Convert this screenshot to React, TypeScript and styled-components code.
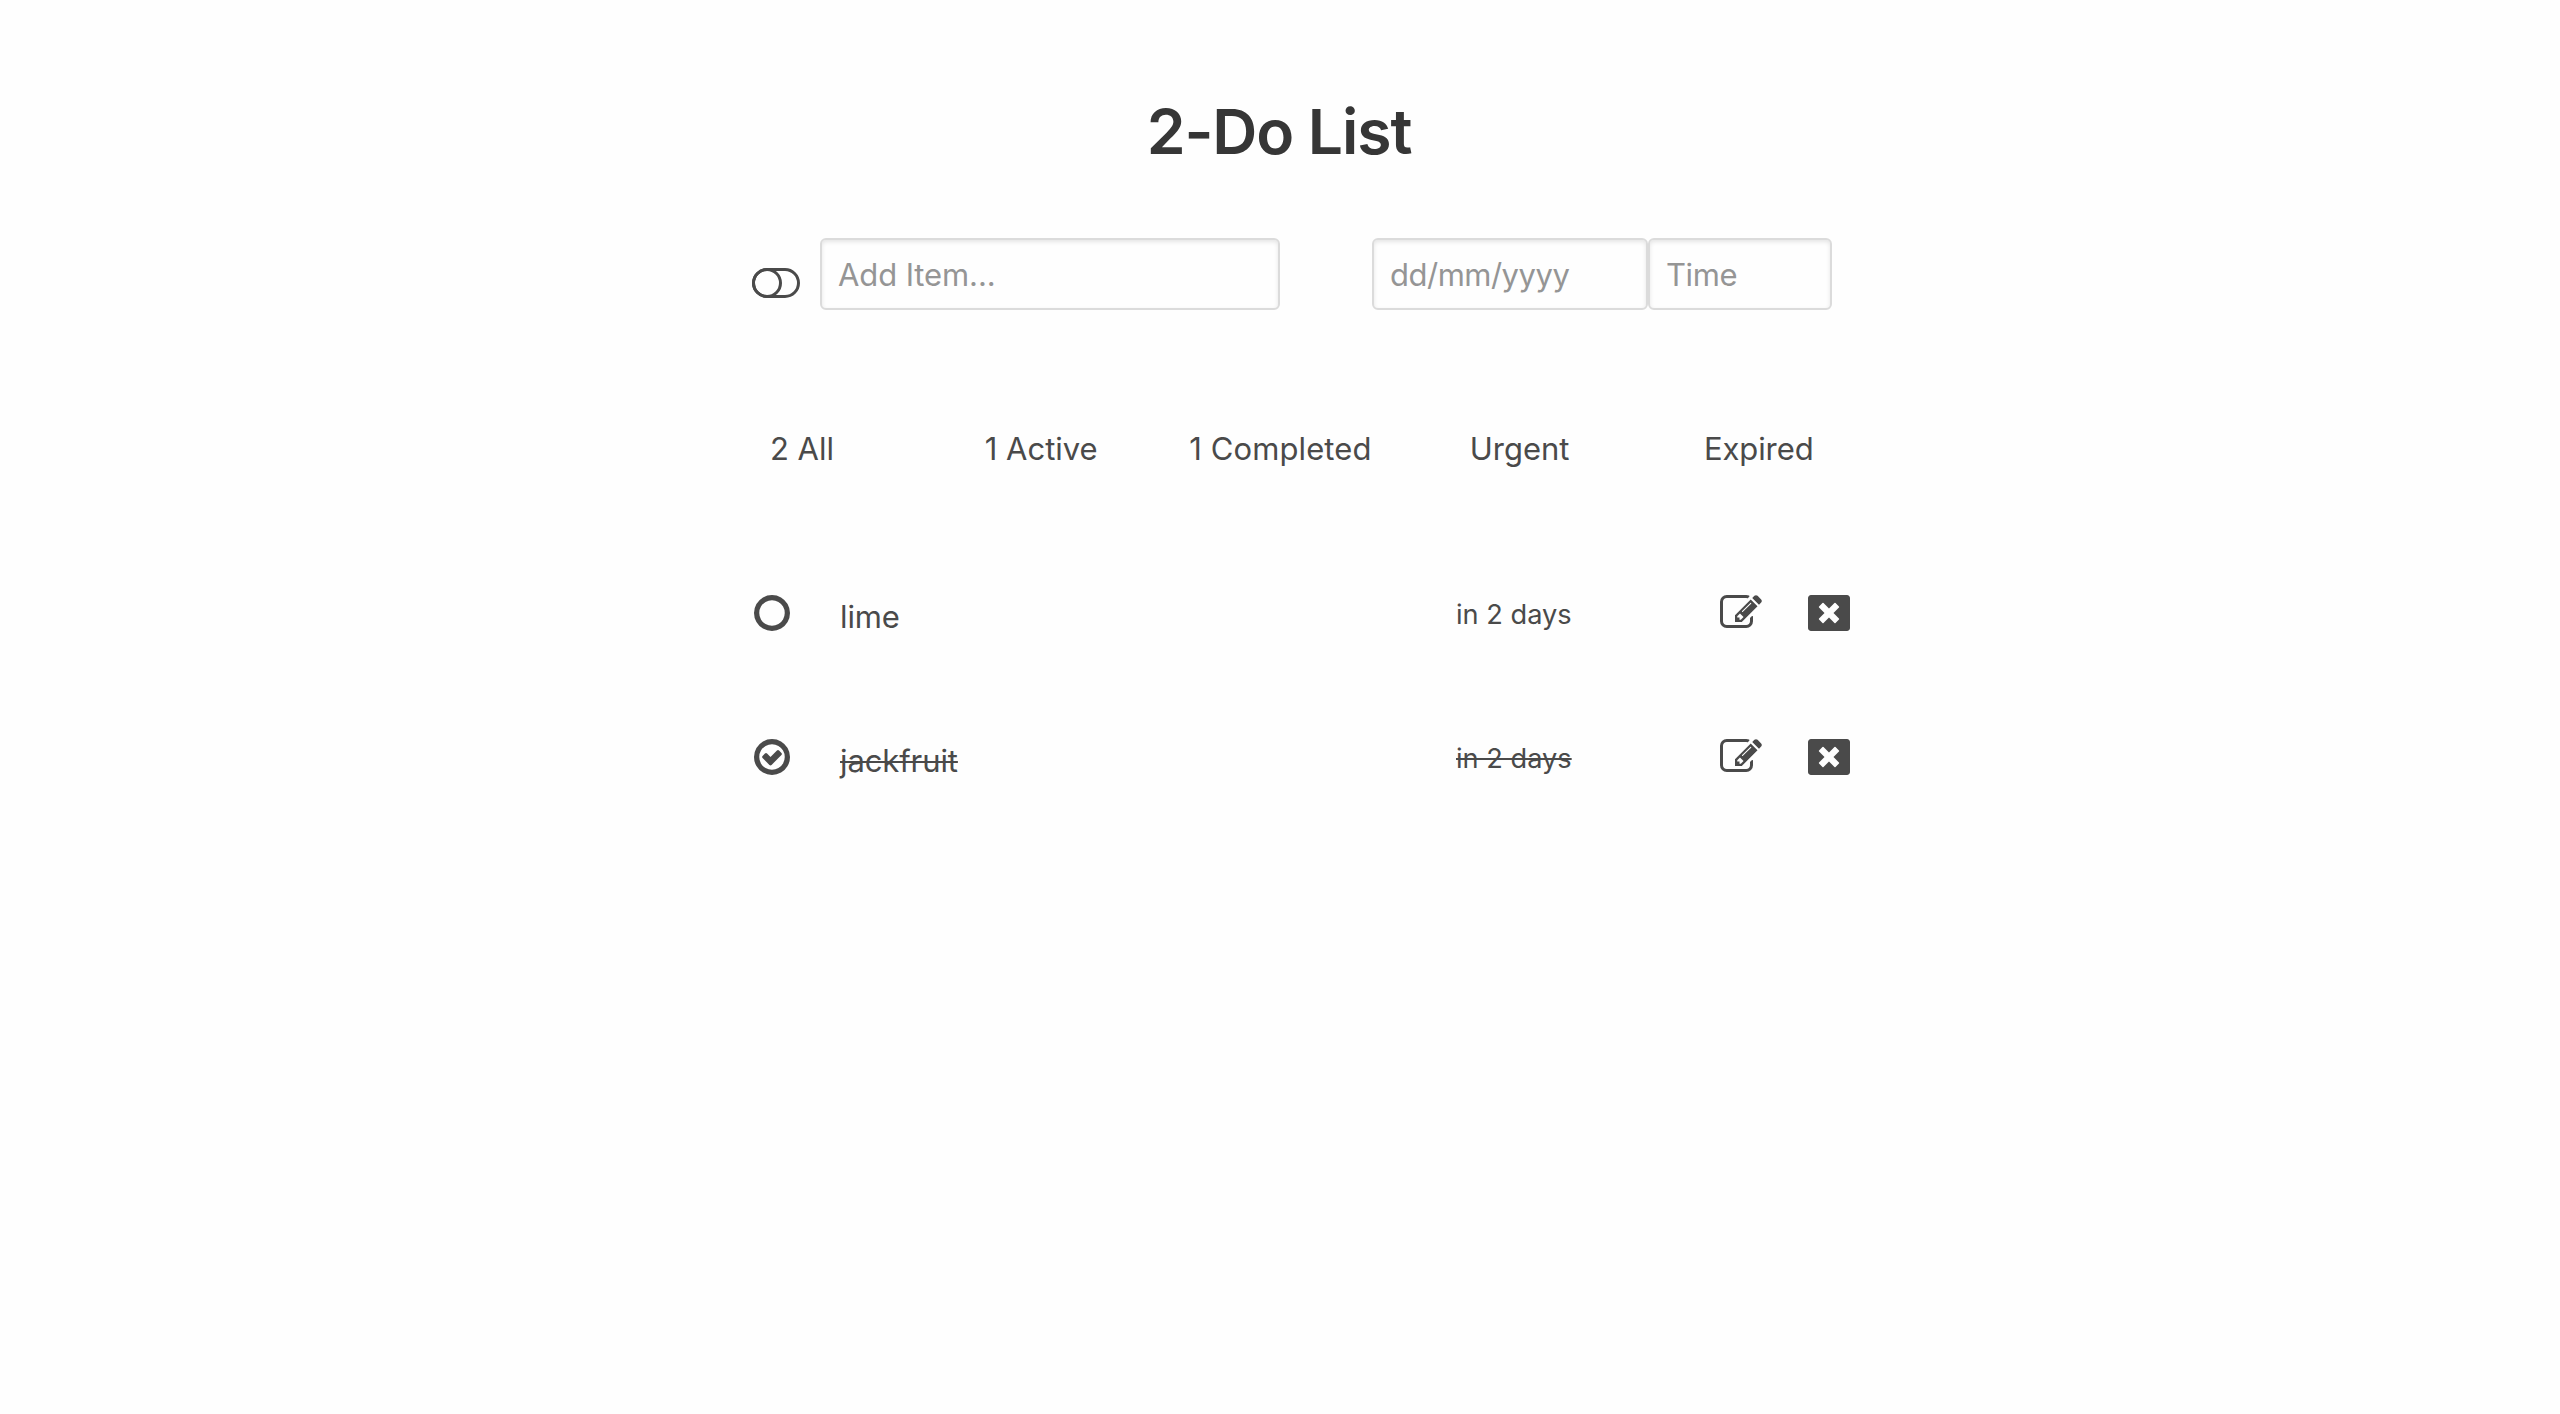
import React from "react";
import styled, { createGlobalStyle } from "styled-components";

const GlobalStyle = createGlobalStyle`
  * { box-sizing: border-box; }
  html, body { margin: 0; padding: 0; background: #fefefe; }
  body {
    min-height: 1414px;
    color: #4a4a4a;
    font-family: Inter, "Liberation Sans", sans-serif;
    font-size: 32px;
    line-height: 48px;
  }
`;

const Page = styled.main`
  width: 1120px;
  margin: 0 auto;
  padding: 96px 0 0 32px;
  display: flex;
  flex-direction: column;
`;

const Title = styled.h1`
  margin: 0 34px 0 0;
  height: 72px;
  text-align: center;
  color: #363636;
  font-size: 62.4px;
  line-height: 72px;
  font-weight: 600;
  letter-spacing: -1.1px;
`;

const EntryForm = styled.form`
  display: flex;
  align-items: flex-start;
  height: 72px;
  margin-top: 70px;
`;

const ToggleSlot = styled.div`
  flex: none;
  width: 68px;
  padding-top: 30px;
  display: flex;
`;

const Field = styled.input<{ $w: number; $gap?: number; $track?: number }>`
  flex: none;
  width: ${(p) => p.$w}px;
  height: 72px;
  margin: 0 0 0 ${(p) => p.$gap ?? 0}px;
  padding: 0 16px;
  border: 2px solid #dbdbdb;
  border-radius: 6px;
  background: #fefefe;
  box-shadow: inset 0 2px 4px rgba(10, 10, 10, 0.1);
  font: 400 31px Inter, "Liberation Sans", sans-serif;
  letter-spacing: ${(p) => p.$track ?? 0}px;
  outline: none;
  &::placeholder { color: #959595; opacity: 1; }
`;

const Filters = styled.nav`
  display: grid;
  grid-template-columns: repeat(5, 239.2px);
  margin: 115px 0 0 -69.6px;
  height: 48px;
`;

const Filter = styled.a<{ $track?: number }>`
  text-align: center;
  white-space: nowrap;
  font-size: 31px;
  letter-spacing: ${(p) => p.$track ?? 0}px;
`;

const List = styled.ul`
  list-style: none;
  margin: 119px 0 0 -1px;
  padding: 0;
`;

const Row = styled.li<{ $done: boolean }>`
  display: flex;
  align-items: flex-start;
  height: 144px;
  span {
    text-decoration: ${(p) => (p.$done ? "line-through" : "none")};
    text-decoration-thickness: 2px;
  }
`;

const IconSlot = styled.button<{ $w: number }>`
  flex: none;
  width: ${(p) => p.$w}px;
  height: 42px;
  padding: 0;
  border: 0;
  background: none;
  color: inherit;
  display: flex;
`;

const ItemText = styled.div`
  flex: none;
  width: 616px;
  padding-top: 1px;
  font-size: 31px;
  line-height: 48px;
  letter-spacing: -0.1px;
`;

const Due = styled.div`
  flex: none;
  width: 264px;
  font-size: 27.2px;
  line-height: 45px;
`;

const Glyph = styled.svg`
  display: block;
  flex: none;
  fill: currentColor;
`;

const ToggleOff = () => (
  <Glyph width="48" height="30" viewBox="0 0 48 30">
    <g fill="none" stroke="currentColor" strokeWidth="3">
      <rect x="1.5" y="1.5" width="45" height="27" rx="13.5" />
      <circle cx="15" cy="15" r="13.5" />
    </g>
  </Glyph>
);

const Icon42 = ({ d }: { d: string }) => (
  <Glyph width="42" height="42" viewBox="0 0 1792 1792"><path d={d} fillRule="evenodd" /></Glyph>
);

const ring = "M896 352q-148 0-273 73t-198 198-73 273 73 273 198 198 273 73 273-73 198-198 73-273-73-273-198-198-273-73zm768 544q0 209-103 385.5t-279.5 279.5-385.5 103-385.5-103-279.5-279.5-103-385.5 103-385.5 279.5-279.5 385.5-103 385.5 103 279.5 279.5 103 385.5z";
const tick = "M1299 813l-422 422q-19 19-45 19t-45-19l-294-294q-19-19-19-45t19-45l102-102q19-19 45-19t45 19l147 147 275-275q19-19 45-19t45 19l102 102q19 19 19 45t-19 45z";
const pencil = "M888 1184l116-116-152-152-116 116v56h96v96h56zm440-720q-16-16-33 1l-350 350q-17 17-1 33t33-1l350-350q17-17 1-33zm80 594v190q0 119-84.5 203.5t-203.5 84.5h-832q-119 0-203.5-84.5t-84.5-203.5v-832q0-119 84.5-203.5t203.5-84.5h832q63 0 117 25 15 7 18 23 3 17-9 29l-49 49q-14 14-32 8-23-6-45-6h-832q-66 0-113 47t-47 113v832q0 66 47 113t113 47h832q66 0 113-47t47-113v-126q0-13 9-22l64-64q15-15 35-7t20 29zm-96-738l288 288-672 672h-288v-288zm444 132l-92 92-288-288 92-92q28-28 68-28t68 28l152 152q28 28 28 68t-28 68z";
const close = "M128 128h1536q53 0 90.5 37.5t37.5 90.5v1280q0 53-37.5 90.5t-90.5 37.5h-1536q-53 0-90.5-37.5t-37.5-90.5v-1280q0-53 37.5-90.5t90.5-37.5zM1175 1321l146-146q10-10 10-23t-10-23l-233-233 233-233q10-10 10-23t-10-23l-146-146q-10-10-23-10t-23 10l-233 233-233-233q-10-10-23-10t-23 10l-146 146q-10 10-10 23t10 23l233 233-233 233q-10 10-10 23t10 23l146 146q10 10 23 10t23-10l233-233 233 233q10 10 23 10t23-10z";

const items = [
  { text: "lime", due: "in 2 days", done: false },
  { text: "jackfruit", due: "in 2 days", done: true },
];

export default function App() {
  return (
    <>
      <GlobalStyle />
      <Page>
        <Title>2-Do List</Title>
        <EntryForm>
          <ToggleSlot><ToggleOff /></ToggleSlot>
          <Field $w={460} $track={-0.1} placeholder="Add Item..." />
          <Field $w={276} $gap={92} $track={-0.5} placeholder="dd/mm/yyyy" />
          <Field $w={184} $track={-0.4} placeholder="Time" />
        </EntryForm>
        <Filters>
          <Filter>2 All</Filter>
          <Filter>1 Active</Filter>
          <Filter $track={0.1}>1 Completed</Filter>
          <Filter>Urgent</Filter>
          <Filter $track={-0.1}>Expired</Filter>
        </Filters>
        <List>
          {items.map((item) => (
            <Row key={item.text} $done={item.done}>
              <IconSlot $w={89}><Icon42 d={item.done ? ring + tick : ring} /></IconSlot>
              <ItemText><span>{item.text}</span></ItemText>
              <Due><span>{item.due}</span></Due>
              <IconSlot $w={88}><Icon42 d={pencil} /></IconSlot>
              <IconSlot $w={42}><Icon42 d={close} /></IconSlot>
            </Row>
          ))}
        </List>
      </Page>
    </>
  );
}
